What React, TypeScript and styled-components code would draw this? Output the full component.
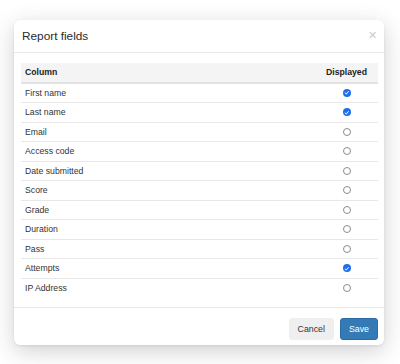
import React, { useState } from 'react';
import styled, { createGlobalStyle } from 'styled-components';

const GlobalStyle = createGlobalStyle`
html, body {
  margin: 0;
  padding: 0;
  background: #fff;
  font-family: "Liberation Sans", Arial, Helvetica, sans-serif;
  color: #333;
}
`;

const Page = styled.div`
width: 400px;
height: 364px;
padding: 20px 0 0 14px;
box-sizing: border-box;
`;

const Modal = styled.div`
width: 370px;
height: 325px;
display: flex;
flex-direction: column;
background: #fff;
border-radius: 6px;
box-shadow: 0 6px 22px rgba(40, 40, 60, 0.22), 0 1px 3px rgba(0, 0, 0, 0.08);
overflow: hidden;
`;

const Header = styled.div`
height: 32px;
display: flex;
align-items: center;
justify-content: space-between;
padding: 0 7px 0 8px;
border-bottom: 1px solid #e9e9e9;
`;

const Title = styled.h4`
margin: 0;
font-size: 11.8px;
font-weight: normal;
color: #2a2a2a;
`;

const Close = styled.button`
border: none;
background: none;
padding: 0;
margin-top: -2px;
font-family: "Liberation Sans", Arial, sans-serif;
font-size: 11px;
line-height: 1;
color: #c9c9c9;
cursor: pointer;
`;

const Body = styled.div`
flex: 1;
padding: 10px 6px 0 7px;
`;

const Row = styled.div<{ $head?: boolean; $first?: boolean }>`
display: grid;
grid-template-columns: 1fr 63px;
align-items: center;
height: 18.5px;
font-size: 8.7px;
background: ${({ $head }) => ($head ? '#f4f4f4' : 'transparent')};
font-weight: ${({ $head }) => ($head ? 'bold' : 'normal')};
color: ${({ $head }) => ($head ? '#222' : '#333')};
border-bottom: ${({ $head }) => ($head ? '2px solid #e2e2e2' : 'none')};
border-top: ${({ $first, $head }) => ($first || $head ? 'none' : '1px solid #e8e8e8')};
`;

const Cell = styled.div<{ $center?: boolean }>`
padding: 0 4px;
text-align: ${({ $center }) => ($center ? 'center' : 'left')};
display: flex;
justify-content: ${({ $center }) => ($center ? 'center' : 'flex-start')};
`;

const Check = styled.span<{ $on: boolean }>`
width: 8px;
height: 8px;
box-sizing: border-box;
border-radius: 50%;
display: inline-flex;
align-items: center;
justify-content: center;
background: ${({ $on }) => ($on ? '#1f6fe8' : '#fff')};
border: ${({ $on }) => ($on ? 'none' : '1px solid #8c8c8c')};
cursor: pointer;
`;

const Footer = styled.div`
height: 38px;
display: flex;
align-items: flex-start;
justify-content: flex-end;
gap: 6px;
padding: 10px 6px 0 7px;
box-sizing: border-box;
border-top: 1px solid #e9e9e9;
`;

const Button = styled.button<{ $primary?: boolean }>`
height: 21.5px;
padding: 0 8px;
border-radius: 3px;
font-family: "Liberation Sans", Arial, sans-serif;
font-size: 8.8px;
border: 1px solid ${({ $primary }) => ($primary ? '#2e6da4' : '#efefef')};
background: ${({ $primary }) => ($primary ? '#337ab7' : '#efefef')};
color: ${({ $primary }) => ($primary ? '#fff' : '#333')};
cursor: pointer;
`;

const fields = [
  { name: 'First name', on: true },
  { name: 'Last name', on: true },
  { name: 'Email', on: false },
  { name: 'Access code', on: false },
  { name: 'Date submitted', on: false },
  { name: 'Score', on: false },
  { name: 'Grade', on: false },
  { name: 'Duration', on: false },
  { name: 'Pass', on: false },
  { name: 'Attempts', on: true },
  { name: 'IP Address', on: false },
];

const App: React.FC = () => {
  const [state, setState] = useState(fields.map((f) => f.on));

  const toggle = (i: number) =>
    setState((s) => s.map((v, j) => (j === i ? !v : v)));

  return (
    <Page>
      <GlobalStyle />
      <Modal>
        <Header>
          <Title>Report fields</Title>
          <Close>✕</Close>
        </Header>
        <Body>
          <Row $head>
            <Cell>Column</Cell>
            <Cell $center>Displayed</Cell>
          </Row>
          {fields.map((f, i) => (
            <Row key={f.name} $first={i === 0}>
              <Cell>{f.name}</Cell>
              <Cell $center>
                <Check $on={state[i]} onClick={() => toggle(i)}>
                  {state[i] && (
                    <svg width="5.5" height="5.5" viewBox="0 0 10 10">
                      <path d="M2 5.3 L4.2 7.4 L8 2.8" fill="none" stroke="#fff" strokeWidth="1.8" strokeLinecap="round" strokeLinejoin="round" />
                    </svg>
                  )}
                </Check>
              </Cell>
            </Row>
          ))}
        </Body>
        <Footer>
          <Button>Cancel</Button>
          <Button $primary>Save</Button>
        </Footer>
      </Modal>
    </Page>
  );
};

export default App;
